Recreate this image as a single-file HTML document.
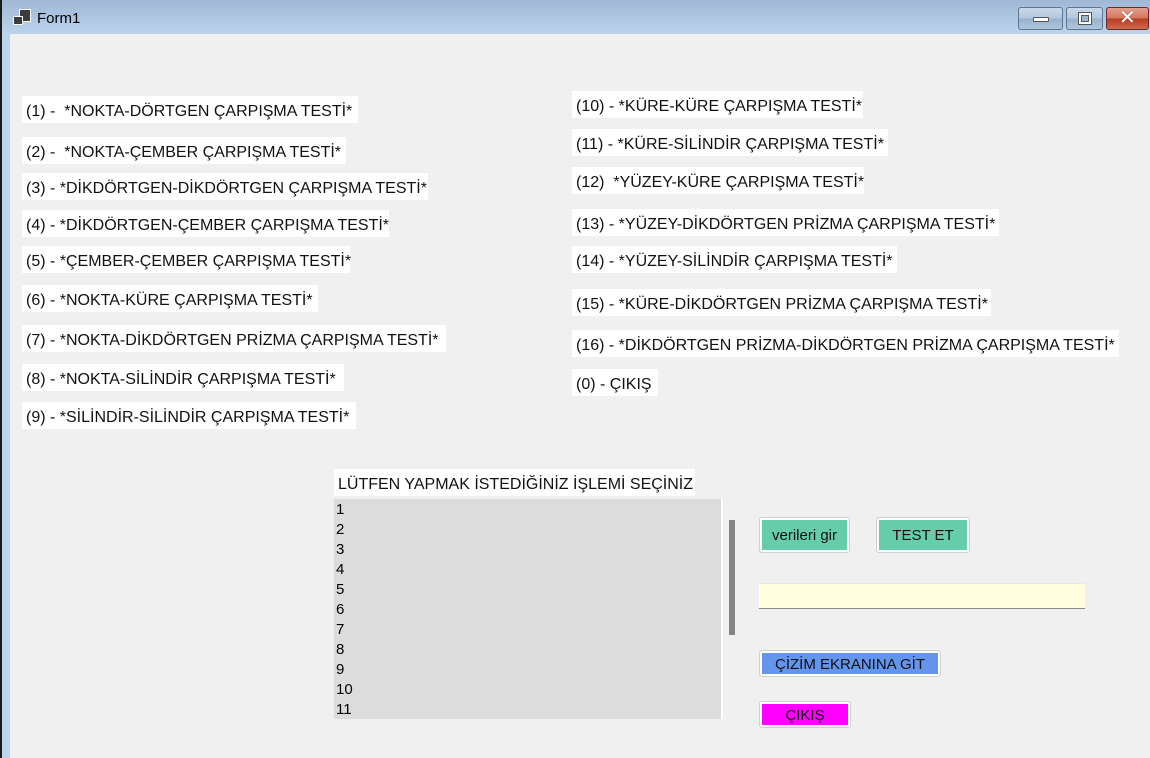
<!DOCTYPE html>
<html><head><meta charset="utf-8"><style>
*{margin:0;padding:0;box-sizing:border-box}
body{width:1150px;height:758px;overflow:hidden;position:relative;background:#f0f0f0;font-family:"Liberation Sans","DejaVu Sans",sans-serif;color:#000}
.tb{position:absolute;left:0;top:0;width:1150px;height:34px;background:linear-gradient(#9fb8d5,#bcd3ec)}
.lb{position:absolute;left:0;top:0;width:2px;height:758px;background:#1a1a1a}
.lb2{position:absolute;left:2px;top:34px;width:8px;height:724px;background:#bcd4ec}
.t{position:absolute;left:37px;top:10px;font-size:15px;color:#000}
.ic1{position:absolute;left:13px;top:16px;width:10px;height:9px;background:#3c3c3c;border:1px solid #fff}
.ic2{position:absolute;left:19px;top:9px;width:12px;height:13px;background:#3c3c3c;border:1px solid #fff}
.wb{position:absolute;top:7px;height:23px;border:1px solid #5e7590;border-radius:3px;background:linear-gradient(#c8d9ea 0%,#b3c8de 48%,#98b1cc 52%,#b0c6dd 100%)}
.cl{background:linear-gradient(#e4a08e 0%,#d47560 48%,#bb3a22 52%,#cf6a4f 100%);border-color:#6b2a22}
.l{position:absolute;background:#fff;height:27px;font-size:16px;line-height:31px;padding-left:4px;white-space:nowrap;color:#111}
.lst{position:absolute;left:334px;top:499px;width:387px;height:220px;background:#dcdcdc;font-size:15px;padding-left:2px;padding-top:1px}
.lst div{height:20px;line-height:19px}
.btn{position:absolute;border:1px solid #d0d0d0;border-radius:3px;background:#fff;padding:2px}
.btn div{width:100%;height:100%;font-size:15px;text-align:center;color:#111}
</style></head><body>
<div class="tb"></div>
<div class="lb"></div><div class="lb2"></div>
<div class="ic2"></div><div class="ic1"></div>
<div class="t">Form1</div>
<div class="wb" style="left:1018px;width:45px"><div style="position:absolute;left:14px;top:9px;width:16px;height:5px;background:#fff;border:1px solid #555;border-radius:1px"></div></div>
<div class="wb" style="left:1066px;width:37px"><div style="position:absolute;left:11px;top:4px;width:14px;height:13px;background:#fff;border:1px solid #555"></div><div style="position:absolute;left:14px;top:7px;width:8px;height:7px;background:#9fb5cc;border:1px solid #555"></div></div>
<div class="wb cl" style="left:1106px;width:43px"><div style="position:absolute;left:12px;top:0;font-size:20px;font-weight:bold;color:#fff;line-height:21px;text-shadow:0 0 1px #444">✕</div></div>

<div class="l" style="left:22px;top:96px;width:336px">(1) -&nbsp; *NOKTA-DÖRTGEN ÇARPIŞMA TESTİ*</div>
<div class="l" style="left:22px;top:137px;width:324px">(2) -&nbsp; *NOKTA-ÇEMBER ÇARPIŞMA TESTİ*</div>
<div class="l" style="left:22px;top:173px;width:406px">(3) - *DİKDÖRTGEN-DİKDÖRTGEN ÇARPIŞMA TESTİ*</div>
<div class="l" style="left:22px;top:210px;width:367px">(4) - *DİKDÖRTGEN-ÇEMBER ÇARPIŞMA TESTİ*</div>
<div class="l" style="left:22px;top:246px;width:328px">(5) - *ÇEMBER-ÇEMBER ÇARPIŞMA TESTİ*</div>
<div class="l" style="left:22px;top:285px;width:296px">(6) - *NOKTA-KÜRE ÇARPIŞMA TESTİ*</div>
<div class="l" style="left:22px;top:325px;width:424px">(7) - *NOKTA-DİKDÖRTGEN PRİZMA ÇARPIŞMA TESTİ*</div>
<div class="l" style="left:22px;top:364px;width:322px">(8) - *NOKTA-SİLİNDİR ÇARPIŞMA TESTİ*</div>
<div class="l" style="left:22px;top:402px;width:334px">(9) - *SİLİNDİR-SİLİNDİR ÇARPIŞMA TESTİ*</div>

<div class="l" style="left:572px;top:91px;width:291px">(10) - *KÜRE-KÜRE ÇARPIŞMA TESTİ*</div>
<div class="l" style="left:572px;top:129px;width:316px">(11) - *KÜRE-SİLİNDİR ÇARPIŞMA TESTİ*</div>
<div class="l" style="left:572px;top:167px;width:292px">(12)&nbsp; *YÜZEY-KÜRE ÇARPIŞMA TESTİ*</div>
<div class="l" style="left:572px;top:209px;width:427px">(13) - *YÜZEY-DİKDÖRTGEN PRİZMA ÇARPIŞMA TESTİ*</div>
<div class="l" style="left:572px;top:246px;width:325px">(14) - *YÜZEY-SİLİNDİR ÇARPIŞMA TESTİ*</div>
<div class="l" style="left:572px;top:289px;width:419px">(15) - *KÜRE-DİKDÖRTGEN PRİZMA ÇARPIŞMA TESTİ*</div>
<div class="l" style="left:572px;top:330px;width:547px">(16) - *DİKDÖRTGEN PRİZMA-DİKDÖRTGEN PRİZMA ÇARPIŞMA TESTİ*</div>
<div class="l" style="left:572px;top:369px;width:86px">(0) - ÇIKIŞ</div>

<div class="l" style="left:334px;top:469px;width:361px">LÜTFEN YAPMAK İSTEDİĞİNİZ İŞLEMİ SEÇİNİZ</div>
<div class="lst"><div>1</div><div>2</div><div>3</div><div>4</div><div>5</div><div>6</div><div>7</div><div>8</div><div>9</div><div>10</div><div>11</div></div>
<div style="position:absolute;left:721px;top:499px;width:2px;height:220px;background:#fff"></div>
<div style="position:absolute;left:729px;top:520px;width:6px;height:115px;background:#858585"></div>

<div class="btn" style="left:759px;top:517px;width:91px;height:36px"><div style="background:#66cdaa;line-height:31px">verileri gir</div></div>
<div class="btn" style="left:876px;top:517px;width:94px;height:36px"><div style="background:#66cdaa;line-height:31px">TEST ET</div></div>
<div style="position:absolute;left:759px;top:583px;width:326px;height:26px;background:#ffffe0;border-bottom:1px solid #888;border-top:1px solid #e8e8e8"></div>
<div class="btn" style="left:759px;top:650px;width:182px;height:27px"><div style="background:#6495ed;line-height:23px">ÇİZİM EKRANINA GİT</div></div>
<div class="btn" style="left:759px;top:701px;width:92px;height:27px"><div style="background:#ff00ff;line-height:23px">ÇIKIŞ</div></div>
</body></html>
